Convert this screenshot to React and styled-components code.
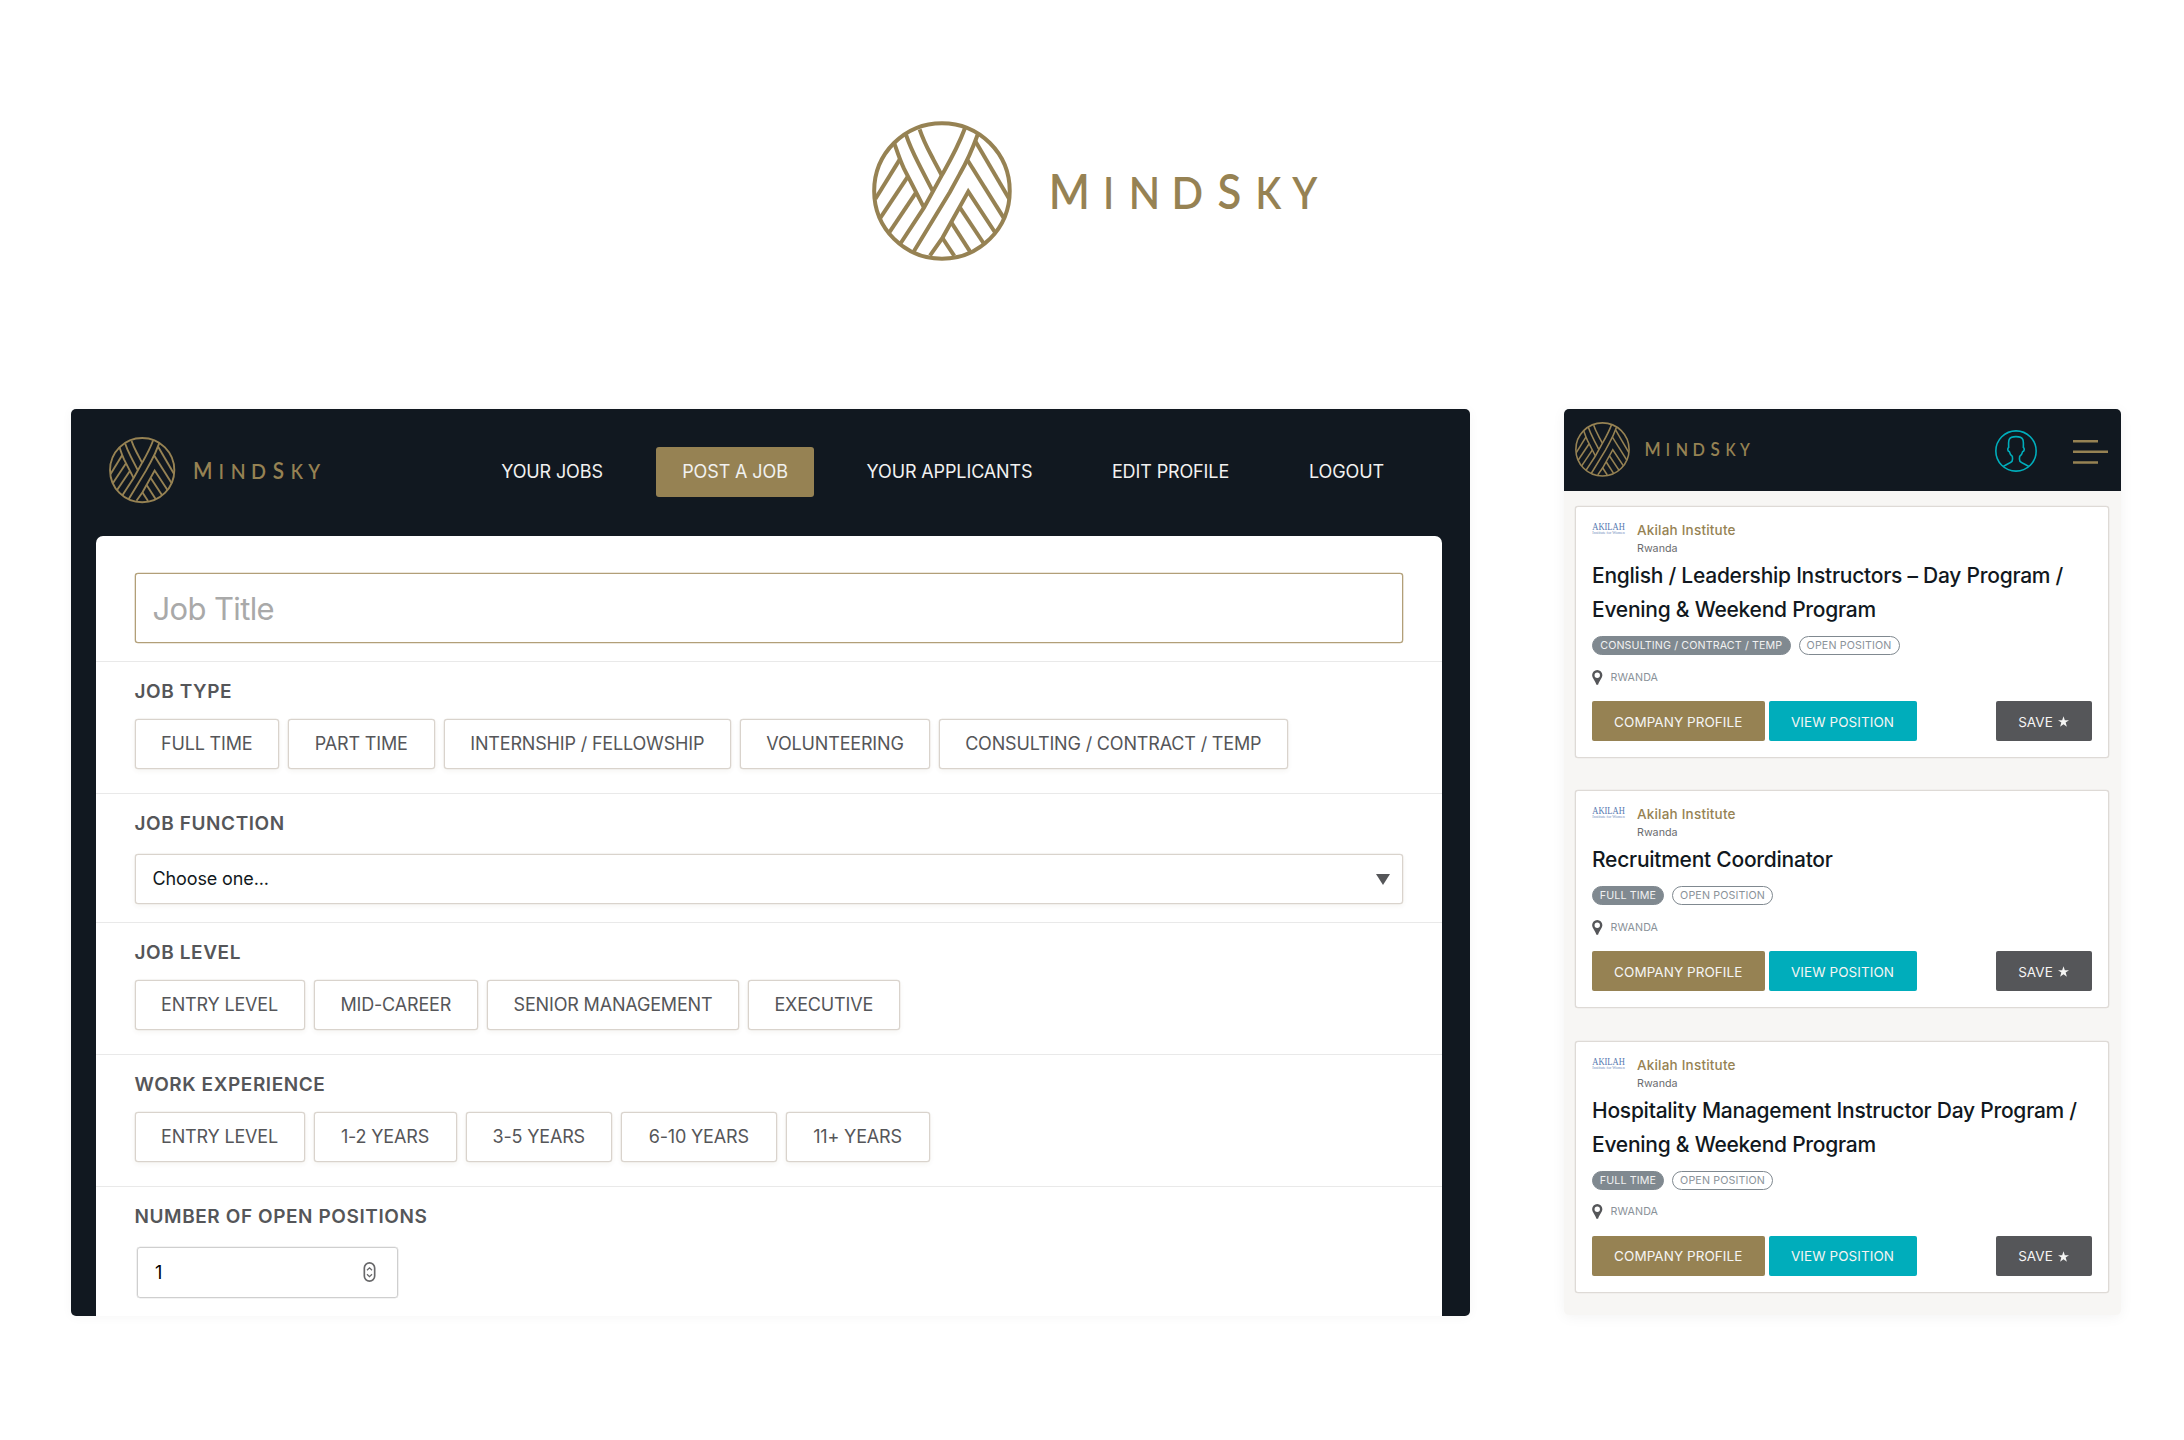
import React from "react";
import styled, { createGlobalStyle, css } from "styled-components";

const color = {
  navy: "#111820",
  gold: "#968253",
  teal: "#00adbb",
  charcoal: "#555659",
  slate: "#808990",
  sand: "#dfdad4",
  paper: "#f7f6f4",
};

const GlobalStyle = createGlobalStyle`
  *, *::before, *::after { box-sizing: border-box; }
  body {
    margin: 0;
    background: #fff;
    font-family: Inter, "Liberation Sans", sans-serif;
    color: ${color.navy};
  }
  button, input { font: inherit; }
`;

const Page = styled.div`
  display: flex;
  flex-direction: column;
  width: 2184px;
  height: 1440px;
  background: #fff;
  overflow: hidden;
`;

const Hero = styled.header`
  display: flex;
  justify-content: center;
  height: 409px;
  padding: 121px 0 0 7px;
`;

const Showcase = styled.main`
  display: flex;
  align-items: flex-start;
  gap: 94px;
  padding-left: 71px;
`;

const LogoSvg = styled.svg`
  display: block;
  flex: none;
  width: ${(p) => p.$width}px;
  height: ${(p) => (p.$width * 420) / 1342}px;
  overflow: visible;
`;

const wordmark = [
  ["M", 597, 145, 0.91],
  ["I", 760.6, 130, 0.86],
  ["N", 837, 130, 0.946],
  ["D", 965, 130, 0.96],
  ["S", 1103, 145, 0.904],
  ["K", 1217, 130, 0.88],
  ["Y", 1328, 130, 0.91],
];

function Logo({ width }) {
  return (
    <LogoSvg $width={width} viewBox="66 62 1342 420" role="img" aria-label="MindSky">
      <g fill="none" stroke={color.gold} strokeWidth="12">
        <circle cx="276" cy="272" r="203.5" />
        <path d="M132 126C142 155 150 180 162 205L222 322" />
        <path d="M168 103C182 145 196 170 212 202L248 272" />
        <path d="M209 87C222 126 236 150 250 177L275 224" />
        <path d="M345 84C322 145 300 182 275 226L222 322L150 432" />
        <path d="M384 101C368 145 352 182 330 220L300 275L190 456" />
        <path d="M240 466L278 412L355 274L435 396" />
        <path d="M330 322L403 432" />
        <path d="M305 368L361 455" />
        <path d="M278 414L313 467" />
        <path d="M376 122L478 296" />
        <path d="M353 180L461 352" />
        <path d="M149 178L76 296" />
        <path d="M173 230L91 353" />
        <path d="M198 277L117 398" />
      </g>
      <g fill={color.gold} fontFamily="Lato, sans-serif" fontWeight="600">
        {wordmark.map(([letter, x, size, scale]) => (
          <text key={letter} fontSize={size} transform={`translate(${x} 325) scale(${scale} 1)`}>
            {letter}
          </text>
        ))}
      </g>
    </LogoSvg>
  );
}

/* ---------- desktop ---------- */

const Desktop = styled.section`
  width: 1399px;
  height: 907px;
  padding: 0 28px 0 25px;
  background: ${color.navy};
  border-radius: 5px;
  overflow: hidden;
  box-shadow: 0 1px 12px rgba(0, 0, 0, 0.04);
`;

const TopBar = styled.div`
  display: flex;
  justify-content: space-between;
  height: 127px;
  padding: 28px 32px 0 13px;
`;

const Nav = styled.nav`
  display: flex;
  gap: 27px;
  padding-top: 10px;
`;

const NavItem = styled.a`
  display: flex;
  align-items: center;
  justify-content: center;
  width: ${(p) => p.$width}px;
  height: 50px;
  border-radius: 3px;
  color: #f1f1f0;
  font-size: 18px;
  line-height: 24px;
  letter-spacing: -0.12px;
  white-space: nowrap;
  ${(p) => p.$active && css`background: ${color.gold};`}
`;

const Form = styled.form`
  height: 780px;
  background: #fff;
  border-radius: 7px 7px 0 0;
`;

const TitleRow = styled.div`
  height: 125px;
  padding: 37px 39px 0 38.5px;
`;

const TitleInput = styled.input`
  display: block;
  width: 100%;
  height: 70px;
  padding: 0 17px;
  border: 1px solid #b29f78;
  border-radius: 3px;
  box-shadow: 0 0 0 0.3px #b29f78;
  background: #fff;
  outline: 0;
  font-size: 31px;
  letter-spacing: -0.64px;
  &::placeholder { color: #a9a9a9; opacity: 1; }
`;

const Field = styled.div`
  display: flex;
  flex-direction: column;
  height: ${(p) => p.$height}px;
  padding: 17.5px 38.5px 0;
  border-top: 1px solid #e9e9e9;
`;

const Label = styled.h3`
  margin: 0 0 ${(p) => p.$gap}px;
  height: 24px;
  color: ${color.charcoal};
  font-size: 19px;
  font-weight: 600;
  line-height: 23px;
  letter-spacing: 0.58px;
`;

const Chips = styled.div`
  display: flex;
  gap: 9px;
`;

const fieldBox = css`
  border: 1px solid #d9d3cc;
  border-radius: 3px;
  background: #fff;
  box-shadow: 0 0 0 0.3px ${color.sand}, 0 2px 5px rgba(90, 70, 40, 0.06);
`;

const Chip = styled.button`
  ${fieldBox}
  width: ${(p) => p.$width}px;
  height: 50px;
  padding: 0;
  color: ${color.charcoal};
  font-size: 18px;
  line-height: 24px;
  letter-spacing: -0.17px;
  white-space: nowrap;
`;

const Select = styled.div`
  ${fieldBox}
  display: flex;
  align-items: center;
  justify-content: space-between;
  width: 1268.5px;
  height: 50px;
  padding: 0 12px 1px 17px;
  font-size: 18px;
  letter-spacing: -0.12px;
`;

const Arrow = styled.span`
  margin-top: 2px;
  border: 7.5px solid transparent;
  border-top: 11px solid ${color.charcoal};
  border-bottom: 0;
`;

const NumberBox = styled.div`
  display: flex;
  align-items: center;
  justify-content: space-between;
  width: 260.5px;
  height: 51px;
  margin-left: 2.5px;
  padding: 0 20.5px 0 17px;
  border: 1px solid #cfcfcf;
  border-radius: 3px;
  box-shadow: 0 0 0 0.3px #cfcfcf;
  color: #000;
  font-size: 18px;
`;

function Stepper() {
  return (
    <svg width="13" height="22" viewBox="70.5 63 39 66" fill="none" stroke="#68686a" strokeWidth="5">
      <rect x="74.5" y="68.5" width="31" height="55" rx="15.5" />
      <path d="M82.5 90.5L90 83.5L97.5 90.5M82.5 103L90 110L97.5 103" strokeWidth="4" />
    </svg>
  );
}

const navItems = [
  ["YOUR JOBS", 154],
  ["POST A JOB", 158],
  ["YOUR APPLICANTS", 217],
  ["EDIT PROFILE", 171],
  ["LOGOUT", 127],
];

const jobTypes = [
  ["FULL TIME", 144.5],
  ["PART TIME", 146.5],
  ["INTERNSHIP / FELLOWSHIP", 287.5],
  ["VOLUNTEERING", 190],
  ["CONSULTING / CONTRACT / TEMP", 348.5],
];
const jobLevels = [
  ["ENTRY LEVEL", 170],
  ["MID-CAREER", 164.5],
  ["SENIOR MANAGEMENT", 252],
  ["EXECUTIVE", 151.5],
];
const experience = [
  ["ENTRY LEVEL", 170],
  ["1-2 YEARS", 143],
  ["3-5 YEARS", 146.5],
  ["6-10 YEARS", 155.5],
  ["11+ YEARS", 144],
];

function ChipField({ label, options }) {
  return (
    <Field $height={132}>
      <Label $gap={15.5}>{label}</Label>
      <Chips>
        {options.map(([text, width]) => (
          <Chip key={text} type="button" $width={width}>{text}</Chip>
        ))}
      </Chips>
    </Field>
  );
}

/* ---------- mobile ---------- */

const Mobile = styled.section`
  width: 556.5px;
  height: 906px;
  background: ${color.paper};
  border-radius: 5px;
  overflow: hidden;
  box-shadow: 0 2px 14px rgba(0, 0, 0, 0.05);
`;

const MobileBar = styled.div`
  display: flex;
  height: 82px;
  padding: 13px 12px 0 11px;
  background: ${color.navy};
`;

const MobileIcons = styled.div`
  display: flex;
  gap: 36px;
  margin: 8px 0 0 auto;
`;

function UserIcon() {
  return (
    <svg width="42" height="42" viewBox="31 28 126 126" fill="none" stroke={color.teal} strokeWidth="4.8">
      <circle cx="94" cy="91" r="60.5" />
      <path d="M56 137C66 131 77 127 82 122C84 117 84 111 83 107C78 103 75 98 74 93C68 91 68 83 72 80C71 60 70 48 94 48C118 48 117 60 116 80C120 83 120 91 114 93C113 98 110 103 105 107C104 111 104 117 106 122C111 127 122 131 132 137" />
    </svg>
  );
}

function MenuIcon() {
  return (
    <svg width="36" height="42" viewBox="0 0 36 42" stroke={color.gold} strokeWidth="2.4">
      <path d="M0 11.3H25M0 21.8H35M0 32.5H25" />
    </svg>
  );
}

const Cards = styled.div`
  display: flex;
  flex-direction: column;
  gap: 32.4px;
  padding: 15px 12px 0 11px;
`;

const Card = styled.article`
  padding: 15px 16px 16px;
  border: 1px solid #dedad6;
  border-radius: 3px;
  box-shadow: 0 0 0 0.3px #dedad6;
  background: #fff;
`;

const Brand = styled.div`
  display: flex;
  gap: 11px;
  height: 37px;
`;

const Company = styled.div`
  display: flex;
  flex-direction: column;
  gap: 3px;
`;

const CompanyName = styled.div`
  color: ${color.gold};
  font-size: 13.5px;
  font-weight: 500;
  line-height: 17px;
  letter-spacing: 0.2px;
`;

const CompanyPlace = styled.div`
  color: #6a6b6e;
  font-size: 10.7px;
  line-height: 14px;
`;

const BrandSvg = styled.svg`
  flex: none;
  overflow: visible;
`;

function AkilahLogo() {
  return (
    <BrandSvg width="34" height="20" viewBox="0 0 34 20" fill="#5578b0" fontFamily="'Liberation Serif', serif">
      <text x="0.3" y="7.6" fontSize="9.8" textLength="32.5" lengthAdjust="spacingAndGlyphs">AKILAH</text>
      <text x="0.3" y="11.6" fontSize="4.4" textLength="32.5" lengthAdjust="spacingAndGlyphs" opacity="0.85">Institute for Women</text>
    </BrandSvg>
  );
}

const CardTitle = styled.h2`
  margin: 0;
  font-size: 21px;
  font-weight: 500;
  line-height: 34px;
  letter-spacing: -0.25px;
  white-space: pre-line;
`;

const Tags = styled.div`
  display: flex;
  gap: 8px;
  margin-top: 9px;
`;

const Tag = styled.span`
  display: flex;
  align-items: center;
  justify-content: center;
  width: ${(p) => p.$width}px;
  height: 19px;
  border: 1px solid ${color.slate};
  border-radius: 10px;
  background: ${(p) => (p.$outline ? "#fff" : color.slate)};
  color: ${(p) => (p.$outline ? "#8a9299" : "#f2f2f2")};
  font-size: 10.7px;
  line-height: 13px;
  letter-spacing: 0.12px;
  white-space: nowrap;
`;

const Place = styled.div`
  display: flex;
  align-items: center;
  gap: 8px;
  height: 16px;
  margin-top: 14px;
  color: #8a9299;
  font-size: 10.7px;
  letter-spacing: 0.1px;
`;

function Pin() {
  return (
    <svg width="10.5" height="15" viewBox="0 0 10.5 15" fill={color.charcoal}>
      <path fillRule="evenodd" d="M5.25 0A5.1 5.1 0 0 0 0.15 5.2C0.15 8 3.6 11 4.4 14.8H6.1C6.9 11 10.35 8 10.35 5.2A5.1 5.1 0 0 0 5.25 0ZM5.25 2.5A2.7 2.7 0 1 1 5.25 7.9A2.7 2.7 0 1 1 5.25 2.5Z" />
    </svg>
  );
}

const Actions = styled.div`
  display: flex;
  gap: 4px;
  margin-top: 16px;
`;

const Action = styled.button`
  display: flex;
  align-items: center;
  justify-content: center;
  gap: 5px;
  width: ${(p) => p.$width}px;
  height: 40px;
  padding: 1px 0 0;
  border: 0;
  border-radius: 2px;
  background: ${(p) => p.$bg};
  color: #f5f5f4;
  font-size: 13.5px;
  letter-spacing: 0.06px;
  white-space: nowrap;
  &:last-child { margin-left: auto; }
`;

function Star() {
  return (
    <svg width="11" height="11" viewBox="0 0 20 19" fill="#f5f5f4">
      <path d="M10 0L12.4 7H20L13.9 11.4L16.2 19L10 14.5L3.8 19L6.1 11.4L0 7H7.6Z" />
    </svg>
  );
}

const jobs = [
  {
    title: "English / Leadership Instructors – Day Program /\nEvening & Weekend Program",
    tag: "CONSULTING / CONTRACT / TEMP",
    tagWidth: 198.5,
  },
  { title: "Recruitment Coordinator", tag: "FULL TIME", tagWidth: 72 },
  {
    title: "Hospitality Management Instructor Day Program /\nEvening & Weekend Program",
    tag: "FULL TIME",
    tagWidth: 72,
  },
];

function JobCard({ title, tag, tagWidth }) {
  return (
    <Card>
      <Brand>
        <AkilahLogo />
        <Company>
          <CompanyName>Akilah Institute</CompanyName>
          <CompanyPlace>Rwanda</CompanyPlace>
        </Company>
      </Brand>
      <CardTitle>{title}</CardTitle>
      <Tags>
        <Tag $width={tagWidth}>{tag}</Tag>
        <Tag $outline $width={101}>OPEN POSITION</Tag>
      </Tags>
      <Place>
        <Pin />
        RWANDA
      </Place>
      <Actions>
        <Action $bg={color.gold} $width={172.5}>COMPANY PROFILE</Action>
        <Action $bg={color.teal} $width={148}>VIEW POSITION</Action>
        <Action $bg={color.charcoal} $width={96}>SAVE <Star /></Action>
      </Actions>
    </Card>
  );
}

export default function App() {
  return (
    <Page>
      <GlobalStyle />
      <Hero>
        <Logo width={447} />
      </Hero>
      <Showcase>
        <Desktop>
          <TopBar>
            <Logo width={212} />
            <Nav>
              {navItems.map(([text, width]) => (
                <NavItem key={text} $width={width} $active={text === "POST A JOB"}>{text}</NavItem>
              ))}
            </Nav>
          </TopBar>
          <Form>
            <TitleRow>
              <TitleInput placeholder="Job Title" />
            </TitleRow>
            <ChipField label="JOB TYPE" options={jobTypes} />
            <Field $height={129}>
              <Label $gap={18}>JOB FUNCTION</Label>
              <Select>
                Choose one...
                <Arrow />
              </Select>
            </Field>
            <ChipField label="JOB LEVEL" options={jobLevels} />
            <ChipField label="WORK EXPERIENCE" options={experience} />
            <Field $height={130}>
              <Label $gap={18}>NUMBER OF OPEN POSITIONS</Label>
              <NumberBox>
                1
                <Stepper />
              </NumberBox>
            </Field>
          </Form>
        </Desktop>
        <Mobile>
          <MobileBar>
            <Logo width={175.5} />
            <MobileIcons>
              <UserIcon />
              <MenuIcon />
            </MobileIcons>
          </MobileBar>
          <Cards>
            {jobs.map((job) => (
              <JobCard key={job.title} {...job} />
            ))}
          </Cards>
        </Mobile>
      </Showcase>
    </Page>
  );
}
